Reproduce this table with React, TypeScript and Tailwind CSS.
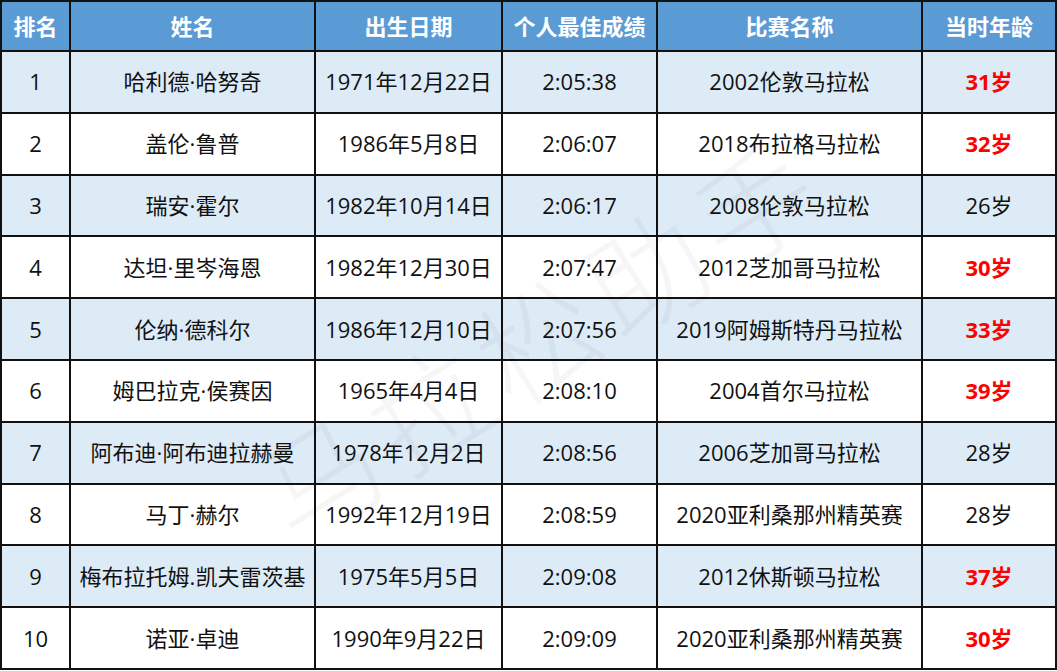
import React from "react";

type Row = {
  rank: string;
  name: string;
  birth: string;
  best: string;
  race: string;
  age: string;
  hot: boolean;
};

const rows: Row[] = [
  { rank: "1", name: "哈利德·哈努奇", birth: "1971年12月22日", best: "2:05:38", race: "2002伦敦马拉松", age: "31岁", hot: true },
  { rank: "2", name: "盖伦·鲁普", birth: "1986年5月8日", best: "2:06:07", race: "2018布拉格马拉松", age: "32岁", hot: true },
  { rank: "3", name: "瑞安·霍尔", birth: "1982年10月14日", best: "2:06:17", race: "2008伦敦马拉松", age: "26岁", hot: false },
  { rank: "4", name: "达坦·里岑海恩", birth: "1982年12月30日", best: "2:07:47", race: "2012芝加哥马拉松", age: "30岁", hot: true },
  { rank: "5", name: "伦纳·德科尔", birth: "1986年12月10日", best: "2:07:56", race: "2019阿姆斯特丹马拉松", age: "33岁", hot: true },
  { rank: "6", name: "姆巴拉克·侯赛因", birth: "1965年4月4日", best: "2:08:10", race: "2004首尔马拉松", age: "39岁", hot: true },
  { rank: "7", name: "阿布迪·阿布迪拉赫曼", birth: "1978年12月2日", best: "2:08:56", race: "2006芝加哥马拉松", age: "28岁", hot: false },
  { rank: "8", name: "马丁·赫尔", birth: "1992年12月19日", best: "2:08:59", race: "2020亚利桑那州精英赛", age: "28岁", hot: false },
  { rank: "9", name: "梅布拉托姆.凯夫雷茨基", birth: "1975年5月5日", best: "2:09:08", race: "2012休斯顿马拉松", age: "37岁", hot: true },
  { rank: "10", name: "诺亚·卓迪", birth: "1990年9月22日", best: "2:09:09", race: "2020亚利桑那州精英赛", age: "30岁", hot: true },
];

const headers = ["排名", "姓名", "出生日期", "个人最佳成绩", "比赛名称", "当时年龄"];

export default function App() {
  return (
    <div
      className="relative w-[1057px] h-[671px] overflow-hidden bg-white"
      style={{ fontFamily: '"Open Sans", "Noto Sans CJK SC", sans-serif' }}
    >
      <div className="grid grid-cols-[67px_243px_185px_153px_263px_132px] grid-rows-[48px_repeat(10,59.8px)] gap-[2px] p-[2px] bg-[#111]">
        {headers.map((h) => (
          <div
            key={h}
            className="flex items-center justify-center bg-[#5b9bd5] text-white font-bold text-[22px]"
          >
            {h}
          </div>
        ))}
        {rows.map((r, i) => {
          const bg = i % 2 === 0 ? "bg-[#ddebf7]" : "bg-white";
          const cell = `flex items-center justify-center text-[22px] text-[#111] whitespace-nowrap ${bg}`;
          return (
            <React.Fragment key={r.rank}>
              <div className={cell}>{r.rank}</div>
              <div className={cell}>{r.name}</div>
              <div className={cell}>{r.birth}</div>
              <div className={cell}>{r.best}</div>
              <div className={cell}>{r.race}</div>
              <div className={`${cell} ${r.hot ? "!text-[#ff0000] font-bold" : ""}`}>{r.age}</div>
            </React.Fragment>
          );
        })}
      </div>

      {/* watermark */}
      <div
        aria-hidden="true"
        className="pointer-events-none select-none absolute left-[222px] top-[250px] -rotate-[32deg] text-[118px] font-light tracking-[10px] text-black/[0.035] whitespace-nowrap"
      >
        马拉松助手
      </div>
    </div>
  );
}
